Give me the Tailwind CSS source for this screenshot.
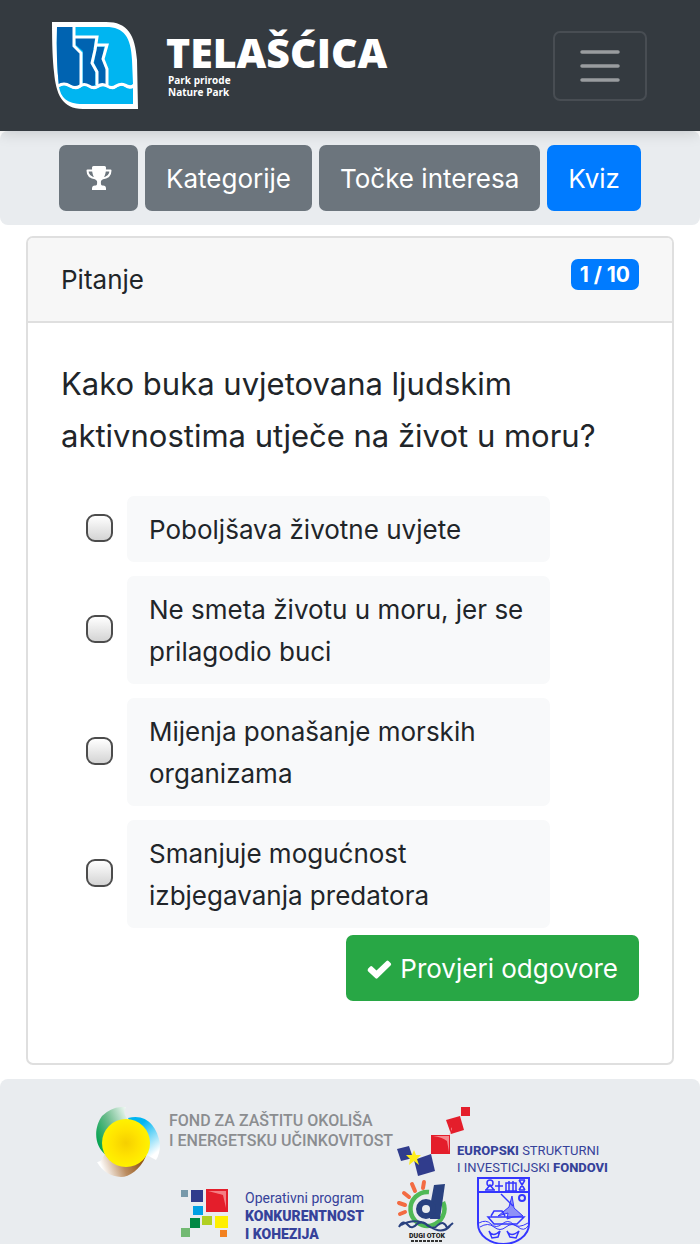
<!DOCTYPE html>
<html lang="hr">
<head>
<meta charset="utf-8">
<meta name="viewport" content="width=device-width, initial-scale=1">
<title>Telašćica – Kviz</title>
<script src="https://cdn.jsdelivr.net/npm/@tailwindcss/browser@4"></script>
</head>
<body class="flex min-h-screen flex-col bg-white font-['Inter',sans-serif] text-[26px] leading-[42px] text-[#212529]">

<header class="relative z-10 flex items-center justify-between bg-[#343a40] py-[22px] pr-[53px] pl-[52px] shadow-[0_2px_14px_rgba(0,0,0,0.15)]">
  <a href="#" class="flex items-start gap-7 text-white" aria-label="Telašćica">
    <svg class="h-[87px] w-[86px]" viewBox="0 0 86 87" aria-hidden="true">
      <path d="M0 0H54C76 0 83 13 85 38L86 87H31C10 87 4 72 2 50Q0 34 0 0Z" fill="#fff"/>
      <path d="M5 5H54C72 5 79 15 80 38L81 62Q77 66 73 63Q69 60 64 64Q60 67 55 63Q50 61 46 64Q41 67 37 63Q32 60 28 64Q23 67 18 63Q13 60 7 65Q4 38 5 5Z" fill="#00b5f1"/>
      <path d="M7 65Q13 60 18 65Q23 69 28 66Q32 62 37 65Q41 69 46 66Q50 63 55 65Q60 69 64 66Q69 62 73 65Q77 68 81 66V82H31C14 82 9 75 7 65Z" fill="#00b5f1"/>
      <path d="M5 5H21V24L28 31V63Q24 66 19 63Q14 60 7 64Q4 38 5 5Z" fill="#0063b1"/>
      <path d="M23 16H43L41 30L39 41L43 49V63Q37 66 31 61V29L24 23Z" fill="#0063b1"/>
      <path d="M45 25H52L50 37L54 48V63H46V49L42 41Z" fill="#0063b1"/>
      <path d="M22 4V24L29 31V63M22 15H45L43 28L40 41L45 50V63M44 23H55L51 37L55 47V63" fill="none" stroke="#fff" stroke-width="3"/>
      <path d="M6 64Q12 60 18 64Q23 67 28 64Q32 61 37 64Q41 67 46 64Q50 61 55 64Q60 67 64 64Q69 61 73 63Q77 66 82 64" fill="none" stroke="#fff" stroke-width="3"/>
    </svg>
    <span class="flex flex-col pt-2 font-['Open_Sans',sans-serif]">
      <span class="text-[41px] leading-[44px] font-extrabold">TELAŠĆICA</span>
      <span class="pl-0.5 text-[10px] leading-3 font-bold">Park prirode<br>Nature Park</span>
    </span>
  </a>
  <button type="button" aria-label="Izbornik" class="flex h-[70px] w-[94px] items-center justify-center rounded-[7px] border-2 border-[#484d53]">
    <svg class="h-[34px] w-[42px]" viewBox="0 0 42 34" stroke="#999c9f" stroke-width="3.500" stroke-linecap="round" aria-hidden="true"><path d="M3 3H39M3 17H39M3 31H39"/></svg>
  </button>
</header>

<nav class="flex justify-center gap-[7px] rounded-lg bg-[#e9ecef] py-[14px] text-white">
  <a href="#" aria-label="Rezultati" class="flex h-[66px] w-[79px] items-center justify-center rounded-[7px] bg-[#6c757d]">
    <svg class="h-[26px] w-[26px]" viewBox="0 0 26 26" fill="#fff" aria-hidden="true">
      <path d="M6 2.500Q6 1 7.500 1H18.500Q20 1 20 2.500C20 9 18.500 13 15 16Q14.500 20 16 20.500H17Q20 20.500 20 23.500V25H6V23.500Q6 20.500 9 20.500H10Q11.500 20 11 16C7.500 13 6 9 6 2.500Z"/>
      <path d="M7 5.500H1.500C1.500 10 4.500 13 10 13.500M19 5.500H24.500C24.500 10 21.500 13 16 13.500" fill="none" stroke="#fff" stroke-width="2" stroke-linejoin="round"/>
    </svg>
  </a>
  <a href="#" class="rounded-[7px] bg-[#6c757d] px-[21px] pt-[13px] pb-[11px]">Kategorije</a>
  <a href="#" class="rounded-[7px] bg-[#6c757d] px-[21px] pt-[13px] pb-[11px]">Točke interesa</a>
  <a href="#" aria-current="page" class="rounded-[7px] bg-[#007bff] px-[21px] pt-[13px] pb-[11px]">Kviz</a>
</nav>

<main class="mx-[26px] mt-[11px] mb-[14px] rounded-[7px] border-2 border-[#dfdfdf]">
  <div class="flex items-start justify-between rounded-t-[5px] border-b-2 border-[#dfdfdf] bg-[#f7f7f7] px-[33px] pt-[21px] pb-5">
    <h1>Pitanje</h1>
    <span class="rounded-[7px] bg-[#007bff] px-[9px] text-[21px] leading-[31px] font-bold text-white">1 / 10</span>
  </div>
  <form class="px-[33px] pt-[35px] pb-[62px]">
    <h2 class="text-[31px] leading-[52px]">Kako buka uvjetovana ljudskim aktivnostima utječe na život u moru?</h2>
    <div class="mt-[34px] mr-[89px] mb-[7px] ml-[25px] flex flex-col gap-[14px]">
      <div class="flex items-center gap-[14px]">
        <input id="o1" type="checkbox" class="mb-[3px] h-7 w-[27px] shrink-0 appearance-none rounded-[9px] border-2 border-[#4c4c4c] bg-linear-to-b from-white to-[#d4d4d4]">
        <label for="o1" class="flex-1 rounded-[7px] bg-[#f8f9fa] px-[22px] pt-[13px] pb-[11px]">Poboljšava životne uvjete</label>
      </div>
      <div class="flex items-center gap-[14px]">
        <input id="o2" type="checkbox" class="mb-[3px] h-7 w-[27px] shrink-0 appearance-none rounded-[9px] border-2 border-[#4c4c4c] bg-linear-to-b from-white to-[#d4d4d4]">
        <label for="o2" class="flex-1 rounded-[7px] bg-[#f8f9fa] px-[22px] pt-[13px] pb-[11px]">Ne smeta životu u moru, jer se prilagodio buci</label>
      </div>
      <div class="flex items-center gap-[14px]">
        <input id="o3" type="checkbox" class="mb-[3px] h-7 w-[27px] shrink-0 appearance-none rounded-[9px] border-2 border-[#4c4c4c] bg-linear-to-b from-white to-[#d4d4d4]">
        <label for="o3" class="flex-1 rounded-[7px] bg-[#f8f9fa] px-[22px] pt-[13px] pb-[11px]">Mijenja ponašanje morskih organizama</label>
      </div>
      <div class="flex items-center gap-[14px]">
        <input id="o4" type="checkbox" class="mb-[3px] h-7 w-[27px] shrink-0 appearance-none rounded-[9px] border-2 border-[#4c4c4c] bg-linear-to-b from-white to-[#d4d4d4]">
        <label for="o4" class="flex-1 rounded-[7px] bg-[#f8f9fa] px-[22px] pt-[13px] pb-[11px]">Smanjuje mogućnost izbjegavanja predatora</label>
      </div>
    </div>
    <div class="flex justify-end">
      <button type="button" class="flex items-center gap-2 rounded-[7px] bg-[#28a745] px-[21px] pt-[13px] pb-[11px] text-white">
        <svg class="h-[19px] w-[25px]" viewBox="0 0 25 19" fill="#fff" aria-hidden="true"><path d="M1 8.700L3.200 6.500Q4.200 5.700 5.200 6.500L9.500 10.500L19.500 1Q20.500 .2 21.500 1L23.800 3.200Q24.600 4.200 23.800 5.200L10.500 18.300Q9.500 19 8.500 18.300L1 11.200Q.2 10.200 1 8.700Z"/></svg>
        Provjeri odgovore
      </button>
    </div>
  </form>
</main>

<footer class="flex grow flex-col items-center rounded-t-lg bg-[#e9ecef] pt-7 font-['Roboto',sans-serif]">
  <div class="flex">
    <div class="flex w-[300px] gap-2">
      <svg class="h-[70px] w-[66px] shrink-0" viewBox="0 0 66 70" role="img" aria-label="Fond za zaštitu okoliša">
        <defs>
          <radialGradient id="sun"><stop offset="0" stop-color="#f5cf00"/><stop offset=".55" stop-color="#ffe300"/><stop offset="1" stop-color="#fff200"/></radialGradient>
          <linearGradient id="leaf" x1="0" y1=".7" x2="1" y2="0"><stop offset="0" stop-color="#00a24f"/><stop offset=".45" stop-color="#6dbc8d"/><stop offset="1" stop-color="#fff"/></linearGradient>
          <linearGradient id="water" x1="0" y1="0" x2=".6" y2="1"><stop offset=".3" stop-color="#00b5f1"/><stop offset="1" stop-color="#fff"/></linearGradient>
          <linearGradient id="soil" x1="1" y1="0" x2="0" y2=".2"><stop offset=".1" stop-color="#8a4d0c"/><stop offset=".55" stop-color="#bb8c60"/><stop offset="1" stop-color="#fff"/></linearGradient>
        </defs>
        <path d="M31 0Q27 7 33 12L12 49C-2 39 -1 20 7 9Q17 -1 31 0Z" fill="url(#leaf)"/>
        <path d="M33 11C51 6 62 19 65 37Q65 47 61 53Q55 50 49 46Z" fill="url(#water)"/>
        <path d="M2 55Q7 56 11 43L51 49C45 63 34 70 26 70Q10 69 2 55Z" fill="url(#soil)"/>
        <circle cx="31" cy="36" r="24" fill="url(#sun)"/>
      </svg>
      <p class="pt-1 text-[16px] leading-5 font-medium whitespace-nowrap text-[#8b8d90]">FOND ZA ZAŠTITU OKOLIŠA<br>I ENERGETSKU UČINKOVITOST</p>
    </div>
    <svg class="h-[70px] w-[210px] overflow-visible font-['Roboto',sans-serif]" viewBox="0 0 210 70" fill="#36429a">
      <path d="M66 0H75V9H66Z" fill="#e41e2b"/>
      <path d="M51 13L65 9L69 23L56 27Z" fill="#e41e2b"/>
      <path d="M36 28H55V47H36Z" fill="#e41e2b"/>
      <path d="M38 29Q47 30 52 34L54 45V29ZM54 28L56 26V20L53 14L57 22Z" fill="#f58a90"/>
      <path d="M2 42L14 39L18 51L6 54Z" fill="#303c8c"/>
      <path d="M19 53L36 47L40 64L23 69Z" fill="#303c8c"/>
      <path d="M19 43L21 48H26L22 52L24 58L19 54L14 58L15 52L11 48H17Z" fill="#ffee19"/>
      <text x="62" y="48" font-size="13"><tspan font-weight="800">EUROPSKI</tspan> STRUKTURNI</text>
      <text x="62" y="65" font-size="13">I INVESTICIJSKI <tspan font-weight="800">FONDOVI</tspan></text>
    </svg>
  </div>
  <div class="flex">
    <div class="flex w-[222px] gap-[15px] pt-3 pl-[10px]">
      <svg class="h-12 w-[50px] shrink-0" viewBox="0 0 50 48" role="img" aria-label="Operativni program">
        <path d="M1 1H8V8H1Z" fill="#7799aa"/><path d="M11 1H23V13H11Z" fill="#303c8c"/><path d="M26 0H48V23H26Z" fill="#e41e2b"/>
        <path d="M28 2H46V19L43 6Z" fill="#f47d83"/><path d="M27 3L42 6L45 22H27Z" fill="#e41e2b"/>
        <path d="M13 17H23V26H13Z" fill="#00a0e4"/><path d="M22 27H32V36H22Z" fill="#b0cf22"/><path d="M35 27H48V39H35Z" fill="#ffef00"/>
        <path d="M10 29H20V39H10Z" fill="#008845"/><path d="M1 39H10V48H1Z" fill="#72b972"/><path d="M40 41H47V48H40Z" fill="#f28120"/>
      </svg>
      <p class="text-[14px] leading-[18px] font-black whitespace-nowrap text-[#36429a]"><span class="font-normal">Operativni program</span><br>KONKURENTNOST<br>I KOHEZIJA</p>
    </div>
    <svg class="h-[68px] w-[80px] font-['Roboto',sans-serif]" viewBox="-2 0 80 68" role="img" aria-label="Dugi otok">
      <path d="M35 15A17 17 0 1 0 49 25" fill="none" stroke="#4fb956" stroke-width="4.500"/>
      <path d="M40 8L51 7L46 42H36L37 24Z" fill="#29417f"/>
      <circle cx="32" cy="32" r="7" fill="#e9ecef" stroke="#29417f" stroke-width="6"/>
      <path d="M30 5L29 11M18 7L21 14M10 16L15 20M5 26L11 28M6 37L11 35" stroke="#f36b42" stroke-width="4" stroke-linecap="round"/>
      <path d="M5 50Q9 42 14 48Q18 53 23 47Q29 43 34 49Q40 53 44 48Q50 43 53 51L59 46M7 48Q22 40 35 49T56 49" fill="none" stroke="#29417f" stroke-width="2"/>
      <text x="15" y="61" font-size="7" font-weight="900" fill="#222">DUGI OTOK</text>
      <path d="M17 64H49" stroke="#333" stroke-width="2" stroke-dasharray="3 1"/>
    </svg>
    <svg class="h-[68px] w-[58px]" viewBox="-2 0 58 68" fill="none" stroke="#3436ff" stroke-width="2" role="img" aria-label="Grb općine">
      <path d="M4 1H55V47C55 59 42 67 29.500 67S4 59 4 47ZM4 15H55"/>
      <path d="M12 13L16 8L20 13M11 13H21M25 4V14M21 9H29M32 14V6H42V14M35 4V14M39 4V14M31 14H43M45 3L51 13M51 3L45 13M45 3H51M45 13H51" stroke-width="1.500"/>
      <circle cx="16" cy="6" r="3" stroke-width="1.500"/>
      <circle cx="48" cy="21" r="3"/>
      <path d="M27 17L39 29" stroke-width="1.500"/>
      <path d="M38 19L35 30L24 39L34 36L33 42L39 40L49 39L40 31Z" fill="#3436ff" fill-opacity=".5" stroke-width="1"/>
      <path d="M14 40H50L43 47H20ZM17 39L20 34H28L31 39" stroke-width="1.500"/>
      <path d="M5 46Q12 42 17 47T28 47T39 47T54 46M6 50Q14 45 20 50T32 50T44 50T54 49" stroke-width="1"/>
      <path d="M15 54Q19 61 26 54L24 60L18 61ZM33 54Q37 61 45 54L42 61L36 60Z" stroke-width="1.500"/>
    </svg>
  </div>
</footer>
</body>
</html>
